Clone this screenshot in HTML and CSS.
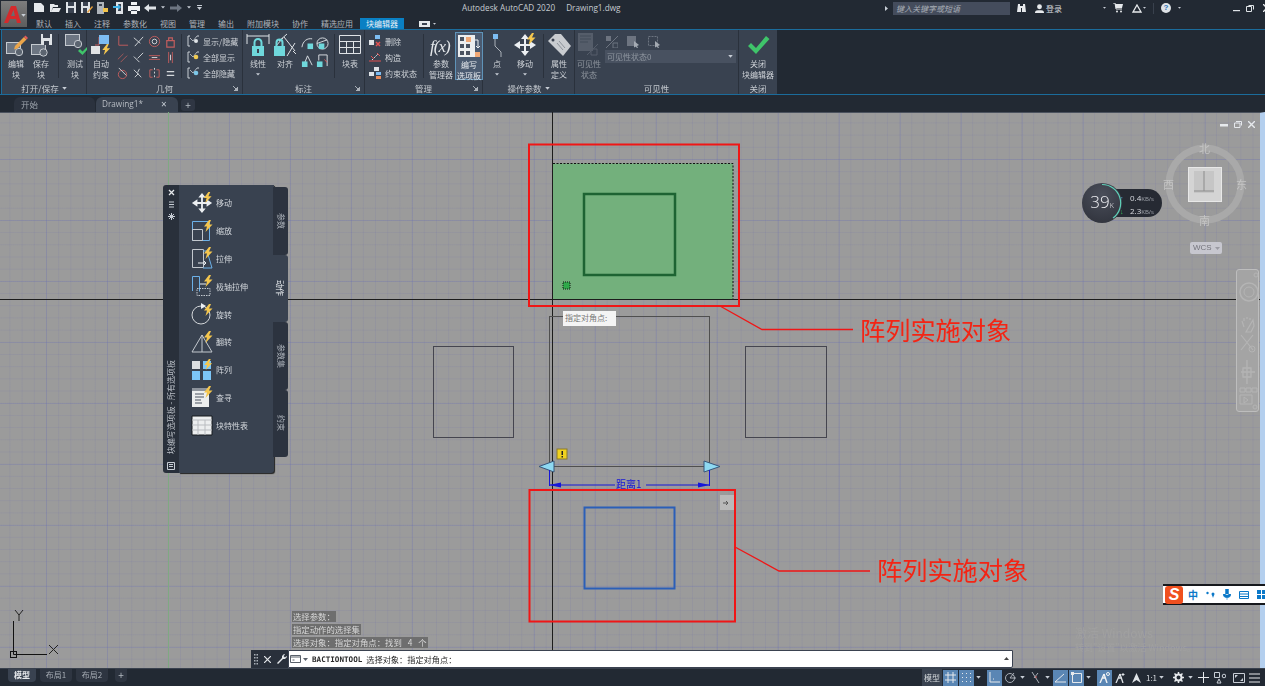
FILE: index.html
```html
<!DOCTYPE html>
<html lang="zh-CN">
<head>
<meta charset="utf-8">
<title>Autodesk AutoCAD 2020 - Drawing1.dwg</title>
<link rel="stylesheet" href="styles.css">
</head>
<body>
<svg class="defs" width="0" height="0" aria-hidden="true">
  <symbol id="bolt" viewBox="0 0 10 12"><path d="M6 0 1 6.500h3L2.500 12 9.500 4.500H6L8 0z" fill="#f4c64e"/></symbol>
  <symbol id="move" viewBox="0 0 24 24"><path d="M11 5h2v14h-2zM5 11h14v2H5z" fill="#eceff2"/><path d="M12 1 8 6h8zM12 23l-4-5h8zM1 12l6-4v8zM23 12l-6-4v8z" fill="#eceff2"/><use href="#bolt" x="13" y="0" width="10" height="12"/></symbol>
  <symbol id="drop" viewBox="0 0 6 4"><path d="M0 0h6L3 3.500z" fill="#c8ced6"/></symbol>
  <symbol id="bracket" viewBox="0 0 13 12"><path d="M3 1H1v10h2M10 1h2" fill="none" stroke="#c9ced4"/><path d="m3 3 3 3 4-5" fill="none" stroke="#c9ced4" stroke-width=".8"/></symbol>
</svg>

<div class="app">
  <header class="titlebar">
    <div class="app-button">
      <svg width="22" height="22" viewBox="0 0 22 22"><path d="M2 20 9 3h5l5 17h-4l-1-4H8l-2 4zM9 13h4l-1.500-6z" fill="#d42a2c"/></svg>
      <svg class="app-drop" width="5" height="3"><use href="#drop"/></svg>
    </div>
    <div class="title-main">
      <div class="title-top">
        <div class="qat">
          <svg width="12" height="11" viewBox="0 0 12 11"><path d="M1 1h7l3 3v6H1z" fill="#e6e9ec"/></svg>
          <svg width="12" height="11" viewBox="0 0 12 11"><path d="M1 2h4l1 1h3v2H4l-2 5H1zM4 6h8l-2 4H2z" fill="#e6e9ec"/></svg>
          <svg width="12" height="11" viewBox="0 0 12 11"><path d="M1 0h10v11H1z" fill="#dfe3e7"/><path d="M3 0h6v4H3zM3 6h6v5H3z" fill="#3a4250"/></svg>
          <svg width="12" height="11" viewBox="0 0 12 11"><path d="M0 0h9v11H0z" fill="#dfe3e7"/><path d="M2 0h5v4H2zM2 6h4v5H2z" fill="#3a4250"/><path d="m6 10 5-6 1 1-5 6z" fill="#e9a13c"/></svg>
          <svg width="12" height="12" viewBox="0 0 12 12"><path d="M0 0h7v12H0z" fill="#aeb4bb"/><path d="M6 6h5v4H6z" fill="#f0c24a"/><path d="M2 2h3v2H2z" fill="#3a4250"/></svg>
          <svg width="11" height="12" viewBox="0 0 11 12"><path d="M3 0h7v12H3z" fill="#dfe3e7"/><path d="M5 2h3v7H5z" fill="#3a4250"/><path d="M0 4h5V2l3 3-3 3V6H0z" fill="#3fb2e8"/></svg>
          <svg width="12" height="12" viewBox="0 0 12 12"><path d="M3 0h6v3H3zM0 4h12v5H0zM3 8h6v4H3z" fill="#f0f2f4"/><path d="M3 8h6v1H3z" fill="#3a4250"/></svg>
          <svg width="12" height="8" viewBox="0 0 12 8"><path d="M0 4 5 0v2.500h7v3H5V8z" fill="#dfe3e7"/></svg>
          <svg class="qat-drop" width="4" height="3"><use href="#drop"/></svg>
          <svg width="12" height="8" viewBox="0 0 12 8"><path d="M12 4 7 0v2.500H0v3h7V8z" fill="#6e7682"/></svg>
          <svg class="qat-drop" width="4" height="3"><use href="#drop"/></svg>
          <svg class="qat-drop" width="5" height="6" viewBox="0 0 5 6"><path d="M0 0h5v1H0zM0 2h5L2.500 5z" fill="#c8ced6"/></svg>
        </div>
        <div class="doc-title"><span>Autodesk AutoCAD 2020</span><span>Drawing1.dwg</span></div>
        <div class="search-area">
          <svg width="3" height="5" viewBox="0 0 3 5"><path d="M0 0l3 2.500L0 5z" fill="#c8ced6"/></svg>
          <div class="search">键入关键字或短语</div>
          <svg width="9" height="10" viewBox="0 0 9 10"><path d="M1 1h2v2h3V1h2l1 8H5V5H4v4H0z" fill="#e6e9ec"/></svg>
          <svg class="user" width="9" height="9" viewBox="0 0 10 10"><circle cx="5" cy="3" r="2.700" fill="#e6e9ec"/><path d="M0 10c0-3 2-3 5-3s5 0 5 3z" fill="#e6e9ec"/></svg>
          <span class="login">登录</span>
          <svg class="login-drop" width="3" height="2"><use href="#drop"/></svg>
          <svg class="cart" width="10" height="10" viewBox="0 0 10 10"><path d="M0 0h2l1 6h6" fill="none" stroke="#e6e9ec"/><path d="M2 1h8L9 5H3z" fill="#e6e9ec"/><circle cx="4" cy="8.500" r="1" fill="#e6e9ec"/><circle cx="8" cy="8.500" r="1" fill="#e6e9ec"/></svg>
          <svg class="a360" width="10" height="9" viewBox="0 0 10 9"><path d="M5 1 9 8H1z" fill="none" stroke="#e6e9ec" stroke-width="1.300"/></svg>
          <svg class="a360-drop" width="3" height="2"><use href="#drop"/></svg>
          <i class="title-sep"></i>
          <span class="help">?</span>
          <svg width="3" height="2"><use href="#drop"/></svg>
          <div class="win-controls">
            <svg width="8" height="8" viewBox="0 0 8 8"><path d="M0 6h7v1.200H0z" fill="#dfe3e7"/></svg>
            <svg width="8" height="8" viewBox="0 0 8 8"><path d="M2.500 1.500h5v4M.5 2.500h5v5h-5z" fill="none" stroke="#dfe3e7"/></svg>
            <svg width="8" height="8" viewBox="0 0 8 8"><path d="m0 0 8 8M8 0 0 8" stroke="#e6e9ec" stroke-width="1.300"/></svg>
          </div>
        </div>
      </div>
      <nav class="ribbon-tabs">
        <span>默认</span><span>插入</span><span>注释</span><span>参数化</span><span>视图</span><span>管理</span><span>输出</span><span>附加模块</span><span>协作</span><span>精选应用</span><span class="tab-active">块编辑器</span>
        <svg class="tab-cam" width="11" height="6" viewBox="0 0 11 6"><path d="M0 0h11v6H0z" fill="#e6e9ec"/><path d="M3 2h5v2H3z" fill="#3a4250"/></svg>
        <svg width="3" height="2"><use href="#drop"/></svg>
      </nav>
    </div>
  </header>

  <section class="ribbon">
    <div class="panel p-open">
      <div class="panel-body">
        <div class="tool"><svg width="24" height="24" viewBox="0 0 24 24"><rect x="2.500" y="9.500" width="14" height="11" fill="#6c7582" stroke="#c5cad0"/><circle cx="15" cy="19" r="3.700" fill="#5b6470" stroke="#c5cad0"/><path d="m11 13 9-9 2.500 2.500-9 9-3.500 1z" fill="#eba54a"/><path d="m20 4 1.500-1.500L24 5l-1.500 1.500z" fill="#e25a5a"/></svg><span>编辑<br>块</span></div>
        <div class="tool"><svg width="24" height="24" viewBox="0 0 24 24"><rect x="2.500" y="11.500" width="14" height="10" fill="#6c7582" stroke="#c5cad0"/><circle cx="14.500" cy="19.500" r="3.700" fill="#5b6470" stroke="#c5cad0"/><path d="M12 1h11v11H12z" fill="#dfe3e7"/><path d="M14 1h7v4h-7zM15 8h5v4h-5z" fill="#3a4250"/></svg><span>保存<br>块</span></div>
        <i class="sep s-a"></i>
        <div class="tool"><svg width="24" height="24" viewBox="0 0 24 24"><rect x="2.500" y="1.500" width="14" height="11" fill="#6c7582" stroke="#c5cad0"/><circle cx="15" cy="11" r="3.700" fill="#5b6470" stroke="#c5cad0"/><path d="m15 18 2-2 2.500 2.500L24 14l1 2-5.500 6z" fill="#3fc46a"/></svg><span>测试<br>块</span></div>
      </div>
      <div class="panel-title">打开/保存 <svg width="5" height="3"><use href="#drop"/></svg></div>
    </div>

    <div class="panel p-geo">
      <div class="panel-body">
        <div class="tool"><svg width="24" height="24" viewBox="0 0 24 24"><path d="M10 4v8M10 12H6" stroke="#c65f5f"/><rect x="10" y="2" width="10" height="9" fill="#7dbdf2"/><rect x="2" y="13" width="9" height="8" fill="#e2e4e6"/><use href="#bolt" x="12" y="11" width="10" height="11"/></svg><span>自动<br>约束</span></div>
        <div class="constraint-grid">
          <svg viewBox="0 0 14 14"><path d="M3 1v10h10" fill="none" stroke="#c25d5d"/></svg>
          <svg viewBox="0 0 14 14"><path d="m2 3 7 6M12 2 3 12" fill="none" stroke="#d5d8db"/></svg>
          <svg viewBox="0 0 14 14"><circle cx="7" cy="7" r="5.500" fill="none" stroke="#c25d5d"/><circle cx="7" cy="7" r="2.500" fill="none" stroke="#d5d8db"/></svg>
          <svg viewBox="0 0 14 14"><path d="M3 6h8v7H3zM5 6V3h4v3" fill="none" stroke="#c25d5d" stroke-width="1.300"/></svg>
          <svg viewBox="0 0 14 14"><path d="m2 9 6-6M5 12l7-7" stroke="#a85a5a"/></svg>
          <svg viewBox="0 0 14 14"><path d="M2 6l6 6M12 2 6 8" stroke="#d5d8db"/></svg>
          <svg viewBox="0 0 14 14"><path d="M1 5h12M1 9h12" stroke="#c25d5d"/><path d="M4 7h6" stroke="#d5d8db"/></svg>
          <svg viewBox="0 0 14 14"><path d="M5 1v12M9 1v12" stroke="#c25d5d"/><path d="M7 4v6" stroke="#d5d8db"/></svg>
          <svg viewBox="0 0 14 14"><circle cx="7" cy="8" r="4.500" fill="none" stroke="#c25d5d"/><path d="m3 1 8 8" stroke="#d5d8db"/></svg>
          <svg viewBox="0 0 14 14"><path d="m2 3 8 8M3 11l4-4M8 2l-2 4" fill="none" stroke="#d5d8db"/></svg>
          <svg viewBox="0 0 14 14"><path d="M7 1v2M7 5v2M7 9v2" stroke="#d5d8db"/><path d="M5 3H2v8h3M9 3h3v8H9" fill="none" stroke="#c25d5d"/></svg>
          <svg viewBox="0 0 14 14"><path d="M3 5h8M3 9h8" stroke="#d5d8db" stroke-width="1.300"/></svg>
        </div>
        <i class="sep"></i>
        <div class="row-list">
          <div class="row"><svg width="13" height="12"><use href="#bracket"/><circle cx="9" cy="6" r="2" fill="#dfe3e7"/></svg>显示/隐藏</div>
          <div class="row"><svg width="13" height="12"><use href="#bracket"/><circle cx="9" cy="6" r="2.300" fill="#f1cb52"/></svg>全部显示</div>
          <div class="row"><svg width="13" height="12"><use href="#bracket"/><circle cx="9" cy="6" r="2.300" fill="#7cc7e8"/></svg>全部隐藏</div>
        </div>
      </div>
      <div class="panel-title">几何<svg class="launch" width="5" height="5" viewBox="0 0 5 5"><path d="M0 0l4 4M5 1v4H1z" stroke="#aab0b8" fill="#aab0b8"/></svg></div>
    </div>

    <div class="panel p-dim">
      <div class="panel-body">
        <div class="tool"><svg width="24" height="24" viewBox="0 0 24 24"><path d="M1 1v10M23 1v10M1 3h22" fill="none" stroke="#dfe3e7"/><path d="M6 13h12v10H6z" fill="#6fd8dc"/><path d="M8.500 13V9.500a3.500 3.500 0 0 1 7 0V13" fill="none" stroke="#6fd8dc" stroke-width="2"/><path d="M11 16h2v4h-2z" fill="#3a4250"/></svg><span>线性<br><svg width="4" height="3"><use href="#drop"/></svg></span></div>
        <div class="tool"><svg width="24" height="24" viewBox="0 0 24 24"><path d="m6 8 8-7M20 18l3 3M2 14l8-9M11 4l11 14M22 10l-8 13" fill="none" stroke="#dfe3e7"/><path d="M1 13h11v10H1z" fill="#6fd8dc"/><path d="M3.500 13V9.500a3 3 0 0 1 6 0V13" fill="none" stroke="#6fd8dc" stroke-width="2"/></svg><span>对齐</span></div>
        <div class="mini-grid">
          <svg viewBox="0 0 14 14"><path d="M1 11C2 4 7 1 12 2" fill="none" stroke="#dfe3e7"/><path d="M7 7h6v6H7z" fill="#6fd8dc"/></svg>
          <svg viewBox="0 0 14 14"><circle cx="7" cy="7" r="6" fill="none" stroke="#dfe3e7"/><path d="M1 7 12 3" stroke="#dfe3e7"/><path d="M3 7h6v6H3z" fill="#6fd8dc"/></svg>
          <svg viewBox="0 0 14 14"><path d="M7 2 3 12M7 2l5 10" stroke="#dfe3e7"/><path d="M1 8h6v6H1z" fill="#6fd8dc"/></svg>
          <svg viewBox="0 0 14 14"><path d="M3 1h9v12" fill="none" stroke="#dfe3e7"/><path d="M3 1v6" stroke="#dfe3e7"/><path d="M1 8h6v6H1z" fill="#6fd8dc"/><path d="M9 6l3 3" stroke="#e05a5a"/></svg>
        </div>
        <i class="sep"></i>
        <div class="tool"><svg width="24" height="24" viewBox="0 0 24 24"><path d="M1.500 2.500h21v18h-21zM1.500 8.500h21M1.500 14.500h21M8.500 8.500v12M15.500 8.500v12" fill="none" stroke="#dfe3e7"/></svg><span>块表</span></div>
      </div>
      <div class="panel-title">标注<svg class="launch" width="5" height="5" viewBox="0 0 5 5"><path d="M0 0l4 4M5 1v4H1z" stroke="#aab0b8" fill="#aab0b8"/></svg></div>
    </div>

    <div class="panel p-manage">
      <div class="panel-body">
        <div class="row-list">
          <div class="row"><svg width="13" height="12" viewBox="0 0 13 12"><path d="M0 5h5v5H0z" fill="#dfe3e7"/><path d="M6 0h5v4H6z" fill="#7dbdf2"/><path d="m7 7 4 4m0-4-4 4" stroke="#e05050" stroke-width="1.500"/></svg>删除</div>
          <div class="row"><svg width="13" height="12" viewBox="0 0 13 12"><path d="M0 10h12" stroke="#e05050"/><path d="m3 9 6-6" stroke="#dfe3e7" stroke-dasharray="2 1"/><path d="m2 5 3 3M8 2l3 3" stroke="#e05050"/></svg>构造</div>
          <div class="row"><svg width="13" height="12" viewBox="0 0 13 12"><path d="M5 0h5v4H5zM0 5h5v4H0z" fill="#dfe3e7"/><path d="M7 5h5v3H7z" fill="#7dbdf2"/><path d="M7 9h5v3H7z" fill="#e98a5a"/></svg>约束状态</div>
        </div>
        <i class="sep"></i>
        <div class="tool"><svg width="24" height="24" viewBox="0 0 24 24"><text x="1" y="19" class="fx">f(x)</text></svg><span>参数<br>管理器</span></div>
        <div class="tool tool-on"><svg width="24" height="24" viewBox="0 0 24 24"><path d="M1 1h17v22H1z" fill="#eceeef"/><path d="M3 3h4v4H3zM3 10h4v4H3zM3 17h4v4H3zM9 10h4v4H9zM9 17h4v4H9z" fill="#4a5260"/><path d="M9 3h5v5H9z" fill="#f0a876"/><path d="M18 18h5v5h-5z" fill="#f0a876"/><path d="M18 6h3v8m-2-2 2 2 2-2" fill="none" stroke="#eceeef"/></svg><span>编写<br>选项板</span></div>
      </div>
      <div class="panel-title">管理<svg class="launch" width="5" height="5" viewBox="0 0 5 5"><path d="M0 0l4 4M5 1v4H1z" stroke="#aab0b8" fill="#aab0b8"/></svg></div>
    </div>

    <div class="panel p-action">
      <div class="panel-body">
        <div class="tool"><svg width="24" height="24" viewBox="0 0 24 24"><path d="M8 1h5v5H8z" fill="#7dbdf2"/><path d="M10 6v7l6 6v5" fill="none" stroke="#aab0b8"/></svg><span>点<br><svg width="4" height="3"><use href="#drop"/></svg></span></div>
        <div class="tool"><svg width="24" height="24"><use href="#move"/></svg><span>移动<br><svg width="4" height="3"><use href="#drop"/></svg></span></div>
        <i class="sep"></i>
        <div class="tool"><svg width="24" height="24" viewBox="0 0 24 24"><path d="M1 8 8 1h6l10 12-8 10z" fill="#c9ccd0"/><circle cx="6" cy="7" r="1.500" fill="#3a4250"/><path d="m10 10 6 7m-4-9 6 7" stroke="#8d939a"/></svg><span>属性<br>定义</span></div>
      </div>
      <div class="panel-title">操作参数 <svg width="5" height="3"><use href="#drop"/></svg></div>
    </div>

    <div class="panel p-vis">
      <div class="panel-body">
        <div class="tool tool-off"><svg width="24" height="24" viewBox="0 0 24 24"><path d="M1 0h15v18H1z" fill="#6d7480"/><path d="M3 3h11M3 6h11M3 9h8" stroke="#4a5260"/><path d="m10 22 11-11M14 16h6v6h-6z" fill="none" stroke="#6d7480"/></svg><span>可见性<br>状态</span></div>
        <div class="vis-controls">
          <div class="vis-icons">
            <svg width="12" height="12" viewBox="0 0 12 12"><path d="M0 0h5v5H0z" fill="#6d7480"/><path d="M7 7h5v5H7zM0 12 12 0" fill="none" stroke="#6d7480"/></svg>
            <svg width="12" height="12" viewBox="0 0 12 12"><path d="M0 0h9v10H0z" fill="#6d7480"/><path d="m7 5 5 4-2 1 1 2-1 .5-1-2-2 1z" fill="#a4aab2"/></svg>
            <svg width="12" height="12" viewBox="0 0 12 12"><path d="M.5.500h9v9h-9z" fill="none" stroke="#6d7480" stroke-dasharray="2 1"/><path d="m7 5 5 4-2 1 1 2-1 .5-1-2-2 1z" fill="#a4aab2"/></svg>
          </div>
          <div class="vis-select">可见性状态0<svg width="5" height="3"><use href="#drop"/></svg></div>
        </div>
      </div>
      <div class="panel-title">可见性</div>
    </div>

    <div class="panel p-close">
      <div class="panel-body">
        <div class="tool tool-wide"><svg width="24" height="24" viewBox="0 0 24 24"><path d="m2 13 3-3 5 5L20 3l3.500 3L10 21z" fill="#3fc46a"/></svg><span>关闭<br>块编辑器</span></div>
      </div>
      <div class="panel-title">关闭</div>
    </div>
  </section>

  <nav class="file-tabs">
    <span class="file-tab">开始</span>
    <span class="file-tab file-current">Drawing1*<b>×</b></span>
    <span class="file-add">+</span>
  </nav>

  <main class="canvas">
    <svg class="drawing" width="1260" height="556" viewBox="0 112 1260 556">
      <path d="M168.500 112v556" stroke="#7fa982"/>
      <rect x="553" y="163.500" width="180" height="136" fill="#73b07c"/>
      <path d="M553 163.500h180v136" fill="none" stroke="#111" stroke-dasharray="2 1.500"/>
      <path d="M0 299.500h1260M552.500 112v538" stroke="#1c1c1c"/>
      <rect x="584" y="194" width="91" height="81" fill="none" stroke="#1e6333" stroke-width="2.500"/>
      <rect x="563" y="282" width="7" height="7" fill="#2fa84a" stroke="#111" stroke-dasharray="1 1"/>
      <rect x="529" y="144.500" width="210" height="161.500" fill="none" stroke="#f01616" stroke-width="2"/>
      <rect x="549.500" y="316.500" width="160" height="150" fill="none" stroke="#4f4f4f"/>
      <rect x="433.500" y="346.500" width="80" height="91" fill="none" stroke="#45454f"/>
      <rect x="745.500" y="346.500" width="81" height="91" fill="none" stroke="#45454f"/>
      <path d="M539 466.500 554 461v11zM720 466.500 704 461v11z" fill="#8ed9f2" stroke="#36557a"/>
      <rect x="557" y="449" width="10" height="10" fill="#f0d21e" stroke="#8b7b2a"/>
      <path d="M561.500 451h1.500v4h-1.500zM561.500 456h1.500v1.500h-1.500z" fill="#222"/>
      <path d="M549.500 470v16M709.500 470v16M549 485h66M646 485h64" stroke="#1616d8"/>
      <path d="M549 485l12-2.500v5zM710 485l-12-2.500v5z" fill="#1616d8"/>
      <text x="616" y="488" class="dim-label">距离1</text>
      <rect x="529.500" y="490" width="205.500" height="131.500" fill="none" stroke="#f01616" stroke-width="2"/>
      <rect x="584.500" y="507.500" width="90" height="81" fill="none" stroke="#2b5fb8" stroke-width="2"/>
      <rect x="720" y="495" width="14" height="15" fill="#b9b9b9"/>
      <path d="M723 503h5M726 501l2 2-2 2" fill="none" stroke="#555"/>
      <path d="M720 306 762 329.500H853M735 547 779 571H870" fill="none" stroke="#f01616" stroke-width="1.300"/>
      <text x="860" y="340" class="note">阵列实施对象</text>
      <text x="877" y="580" class="note">阵列实施对象</text>
      <path d="M13.500 621v33.500H47" fill="none" stroke="#111"/>
      <rect x="10.500" y="651.500" width="6" height="6" fill="none" stroke="#111"/>
      <path d="m15 610 4 5 4-5M19 615v6M49 645l9 9M58 645l-9 9" fill="none" stroke="#222"/>
    </svg>

    <aside class="palette">
      <div class="palette-strip">
        <div class="strip-icons">
          <svg width="7" height="7" viewBox="0 0 7 7"><path d="m1 1 5 5M6 1 1 6" stroke="#e6e9ec" stroke-width="1.300"/></svg>
          <svg width="7" height="7" viewBox="0 0 7 7"><path d="M1 1h5M1 3.500h5M1 6h5" stroke="#c8ced6"/></svg>
          <svg width="7" height="7" viewBox="0 0 7 7"><path d="M1 1l5 5M6 1 1 6M3.500 0v7M0 3.500h7" stroke="#c8ced6"/></svg>
        </div>
        <div class="strip-title">块编写选项板 - 所有选项板</div>
        <svg class="strip-foot" width="8" height="8" viewBox="0 0 8 8"><path d="M.5.500h7v7h-7zM2 2.500h4M2 4.500h4" fill="none" stroke="#c8ced6"/></svg>
      </div>
      <ul class="palette-list">
        <li><svg width="22" height="22"><use href="#move"/></svg>移动</li>
        <li><svg width="22" height="22" viewBox="0 0 22 22"><path d="M1.500 1.500h17v19h-17z" fill="none" stroke="#6cb1e8"/><path d="M1.500 9.500h10v11h-10z" fill="none" stroke="#c3c8ce"/><use href="#bolt" x="12" y="0" width="10" height="12"/></svg>缩放</li>
        <li><svg width="22" height="22" viewBox="0 0 22 22"><path d="M1.500 2.500h11v18h-11z" fill="none" stroke="#c3c8ce"/><path d="M12 4l4 0 5 17H12" fill="none" stroke="#6cb1e8"/><path d="M7 16h8m-2-2 2 2-2 2" fill="none" stroke="#eceff2"/><use href="#bolt" x="12" y="0" width="10" height="12"/></svg>拉伸</li>
        <li><svg width="22" height="22" viewBox="0 0 22 22"><path d="M1.500 16V1.500h7v15" fill="none" stroke="#6cb1e8"/><path d="M6 13.500h13v7H6z" fill="none" stroke="#c3c8ce" stroke-dasharray="1.500 1"/><path d="M9 9h6" stroke="#eceff2"/><use href="#bolt" x="12" y="0" width="10" height="12"/></svg>极轴拉伸</li>
        <li><svg width="22" height="22" viewBox="0 0 22 22"><circle cx="10" cy="12" r="9" fill="none" stroke="#d5d8db"/><path d="M10 0l5 3-5 3z" fill="#eceff2"/><use href="#bolt" x="12" y="1" width="10" height="12"/></svg>旋转</li>
        <li><svg width="22" height="22" viewBox="0 0 22 22"><path d="M1 21 11 4v17zM11 4l10 17H11" fill="none" stroke="#c3c8ce"/><use href="#bolt" x="12" y="0" width="10" height="12"/></svg>翻转</li>
        <li><svg width="22" height="22" viewBox="0 0 22 22"><path d="M1 2h8v8H1z" fill="#dcdfe2"/><path d="M12 2h8v8h-8zM1 12h8v9H1zM12 12h8v9h-8z" fill="#7cc5f7"/><use href="#bolt" x="12" y="0" width="10" height="11"/></svg>阵列</li>
        <li><svg width="22" height="22" viewBox="0 0 22 22"><path d="M1 2h17v19H1z" fill="#eceeef"/><path d="M1 2h17v3H1z" fill="#8e949c"/><path d="M4 8h9M4 11h9M4 14h6M4 17h7" stroke="#4a5260"/><use href="#bolt" x="12" y="0" width="10" height="12"/></svg>查寻</li>
        <li><svg width="22" height="22" viewBox="0 0 22 22"><path d="M1 2h20v19H1z" fill="#eceeef" stroke="#15181d"/><path d="M1 6h20M1 11h20M1 16h20M7 6v15M14 6v15" stroke="#b9bcc0"/></svg>块特性表</li>
      </ul>
      <div class="palette-tabs">
        <div class="ptab">参数</div>
        <div class="ptab ptab-on">动作</div>
        <div class="ptab">参数集</div>
        <div class="ptab">约束</div>
      </div>
    </aside>

    <div class="tooltip">指定对角点:</div>

    <div class="speed">
      <div class="speed-pill">
        <div><b class="up">↑</b>0.4<small>KB/s</small></div>
        <div><b class="down">↓</b>2.3<small>KB/s</small></div>
      </div>
      <div class="speed-ball">39<small>K</small>
        <svg width="40" height="40" viewBox="0 0 40 40"><path d="M20 1.500A18.500 18.500 0 0 1 31 35" fill="none" stroke="#5fd0b8" stroke-width="1.200"/></svg>
      </div>
    </div>

    <div class="win-mini">
      <svg width="8" height="6" viewBox="0 0 8 6"><path d="M0 2h8v2.500H0z" fill="#e6e9ec"/></svg>
      <svg width="8" height="7" viewBox="0 0 8 7"><path d="M2 .5h5.500v4M.5 2h5.500v4.500H.5z" fill="none" stroke="#e6e9ec"/></svg>
      <svg width="7" height="7" viewBox="0 0 7 7"><path d="m0 0 7 7M7 0 0 7" stroke="#e6e9ec" stroke-width="1.400"/></svg>
    </div>

    <div class="viewcube">
      <svg width="84" height="84" viewBox="0 0 84 84">
        <circle cx="42" cy="42" r="36" fill="none" stroke="#a9a9a9" stroke-width="7"/>
        <rect x="25.500" y="25.500" width="33" height="34" fill="#d4d4d4" stroke="#e8e8e8"/>
        <rect x="31" y="29" width="20" height="22" fill="#c6c6c6"/>
        <path d="M41 29v20M31 49h20" stroke="#8c8c8c"/>
      </svg>
      <span class="vc-n">北</span><span class="vc-w">西</span><span class="vc-e">东</span><span class="vc-s">南</span>
      <div class="wcs">WCS <svg width="5" height="3" viewBox="0 0 5 3"><path d="M0 0h5L2.500 3z" fill="#9a9aa2"/></svg></div>
    </div>

    <div class="navbar">
      <svg width="22" height="142" viewBox="0 0 22 142">
        <g fill="none" stroke="#b4b4b4">
          <circle cx="19" cy="5" r="2"/>
          <circle cx="12" cy="22" r="9" stroke-width="1.500"/><circle cx="12" cy="22" r="5"/>
          <path d="M7 57 5 51M7 51v-3M10 49v-2M13 48v2M16 50l1 6-3 6H9z" stroke-width="1.200"/>
          <path d="m4 65 12 15M16 65 4 80" stroke-width="1.200"/><circle cx="15" cy="79" r="3"/>
          <path d="M10 90v24M4 102h14M6 98h8v9H6z" stroke-width="1.300"/>
          <path d="M3 118h5v4H3zM9 118h5v4H9zM15 118h5v4h-5zM3 125h12v9H3z"/>
          <path d="m7 127 4 3-4 3z"/>
          <circle cx="18" cy="137" r="2"/>
        </g>
      </svg>
    </div>

    <div class="sogou">
      <span class="sogou-logo">S</span><span class="sg-zh">中</span>
      <svg width="9" height="9" viewBox="0 0 9 9"><circle cx="1.500" cy="3" r="1.200" fill="#0b78c8"/><circle cx="7" cy="4" r="1.500" fill="#0b78c8"/><path d="M6 5h2l-1 3z" fill="#0b78c8"/></svg>
      <svg width="8" height="11" viewBox="0 0 8 11"><path d="M2.500 0h3v6h-3zM0 5c0 5 8 5 8 0M4 8v3" fill="#0b78c8" stroke="#0b78c8" stroke-width=".5"/></svg>
      <svg width="10" height="8" viewBox="0 0 10 8"><path d="M.5.500h9v7h-9zM0 3h10M0 5.500h10" fill="none" stroke="#0b78c8"/></svg>
      <svg width="9" height="9" viewBox="0 0 9 9"><path d="M0 0h4v4H0zM5 0h4v4H5zM0 5h4v4H0zM5 5h4v4H5z" fill="#0b78c8"/></svg>
    </div>

    <div class="watermark"><div class="wm-big">激活 Windows</div><div>转到"设置"以激活 Windows。</div></div>

    <div class="history">
      <span>选择参数：</span><span>指定动作的选择集</span><span>选择对象：指定对角点：找到 4 个</span>
    </div>

    <div class="cmdline">
      <div class="cmd-tools">
        <svg width="4" height="11" viewBox="0 0 4 11"><path d="M0 0h1.500v1.500H0zM2.500 0H4v1.500H2.500zM0 3h1.500v1.500H0zM2.500 3H4v1.500H2.500zM0 6h1.500v1.500H0zM2.500 6H4v1.500H2.500zM0 9h1.500v1.500H0zM2.500 9H4v1.500H2.500z" fill="#aab0b8"/></svg>
        <svg width="7" height="7" viewBox="0 0 7 7"><path d="m0 0 7 7M7 0 0 7" stroke="#e6e9ec" stroke-width="1.200"/></svg>
        <svg width="10" height="10" viewBox="0 0 10 10"><path d="m0 9 5-5V2l2-2 1 .5L6.500 2l1.500 1.500L9.500 2l.5 1-2 2H6L1 10z" fill="#e6e9ec"/></svg>
      </div>
      <div class="cmd-input">
        <svg width="11" height="8" viewBox="0 0 11 8"><path d="M.5.500h10v7H.5zM1 2h9M2.500 5h2" fill="none" stroke="#59606a"/></svg>
        <svg class="cmd-drop" width="5" height="3" viewBox="0 0 5 3"><path d="M0 0h5L2.500 3z" fill="#59606a"/></svg>
        <b>BACTIONTOOL</b><span>选择对象：指定对角点：</span>
        <svg class="cmd-up" width="5" height="3" viewBox="0 0 5 3"><path d="M0 3h5L2.500 0z" fill="#444"/></svg>
      </div>
    </div>
  </main>

  <footer class="statusbar">
    <div class="layouts">
      <span class="layout layout-on">模型</span><span class="layout">布局1</span><span class="layout">布局2</span><span class="layout-add">+</span>
    </div>
    <div class="status-tools">
      <span class="st-model">模型</span>
      <span class="st on"><svg width="11" height="11" viewBox="0 0 11 11"><path d="M3 0v11M8 0v11M0 3h11M0 8h11" stroke="#e6e9ec"/></svg></span>
      <span class="st on"><svg width="9" height="9" viewBox="0 0 9 9"><path d="M0 0h1v1H0zM4 0h1v1H4zM8 0h1v1H8zM0 4h1v1H0zM4 4h1v1H4zM8 4h1v1H8zM0 8h1v1H0zM4 8h1v1H4zM8 8h1v1H8z" fill="#e6e9ec"/></svg></span>
      <svg class="st-drop" width="5" height="3"><use href="#drop"/></svg>
      <span class="st on on-gap"><svg width="11" height="11" viewBox="0 0 11 11"><path d="M1 0v10h10" fill="none" stroke="#e6e9ec"/><path d="M4 7h1" stroke="#e6e9ec"/></svg></span>
      <span class="st"><svg width="11" height="11" viewBox="0 0 11 11"><circle cx="5" cy="6" r="4.500" fill="none" stroke="#aab0b8"/><path d="M5 6h6M5 6l4-5" stroke="#aab0b8"/></svg></span>
      <svg class="st-drop" width="5" height="3"><use href="#drop"/></svg>
      <span class="st"><svg width="11" height="11" viewBox="0 0 11 11"><path d="m2 0 7 11M8 1 4 6" stroke="#aab0b8"/><path d="M5 5h2" stroke="#d05a5a"/></svg></span>
      <svg class="st-drop" width="5" height="3"><use href="#drop"/></svg>
      <span class="st on"><svg width="11" height="11" viewBox="0 0 11 11"><path d="M0 10h11M0 10 9 2" stroke="#e6e9ec"/></svg></span>
      <span class="st on"><svg width="11" height="11" viewBox="0 0 11 11"><path d="M1.500 1.500h9v9h-9z" fill="none" stroke="#e6e9ec"/><path d="M0 0h3v3H0z" fill="#e6e9ec"/></svg></span>
      <svg class="st-drop" width="5" height="3"><use href="#drop"/></svg>
      <span class="st on on-gap"><svg width="11" height="11" viewBox="0 0 11 11"><path d="M5 2 1 11M5 2l3 9M3 6h4" stroke="#f0f2f4" stroke-width="1.400"/><circle cx="9" cy="2" r="1.500" fill="none" stroke="#f0f2f4"/></svg></span>
      <span class="st"><svg width="11" height="11" viewBox="0 0 11 11"><path d="M5 2 1 11M5 2l3 9M3 6h4" stroke="#dfe3e7" stroke-width="1.300"/><path d="M8 1v3M6.500 2.500h3" stroke="#dfe3e7"/></svg></span>
      <span class="st"><svg width="11" height="11" viewBox="0 0 11 11"><path d="M5.500 1 1 11l4.500-3 4.500 3z" fill="#dfe3e7"/></svg></span>
      <span class="st-scale">1:1</span>
      <svg class="st-drop" width="5" height="3"><use href="#drop"/></svg>
      <span class="st st-gear"><svg width="11" height="11" viewBox="0 0 11 11"><circle cx="5.500" cy="5.500" r="3" fill="none" stroke="#e6e9ec" stroke-width="2"/><path d="M5.500 0v2M5.500 9v2M0 5.500h2M9 5.500h2M1.500 1.500 3 3M8 8l1.500 1.500M9.500 1.500 8 3M3 8 1.500 9.500" stroke="#e6e9ec" stroke-width="1.500"/></svg></span>
      <svg class="st-drop" width="5" height="3"><use href="#drop"/></svg>
      <span class="st"><svg width="11" height="11" viewBox="0 0 11 11"><path d="M5.500 0v11M0 5.500h11" stroke="#e6e9ec"/></svg></span>
      <span class="st"><svg width="12" height="12" viewBox="0 0 12 12"><path d="M.5.500h5v5h-5zM3 11l2-4 2 4z" fill="none" stroke="#c8ced6"/><circle cx="10" cy="4" r="1.800" fill="none" stroke="#c8ced6"/></svg></span>
      <span class="st st-wide"><svg width="12" height="10" viewBox="0 0 12 10"><path d="M.5.500h11v9H.5z" fill="none" stroke="#c8ced6"/><path d="M2 2h3L2 5zM10 8H7l3-3z" fill="#c8ced6"/></svg></span>
      <span class="st"><svg width="11" height="10" viewBox="0 0 11 10"><path d="M0 1h11M0 5h11M0 9h11" stroke="#e6e9ec"/></svg></span>
    </div>
  </footer>
</div>
</body>
</html>
```

FILE: styles.css
```css
* { box-sizing: border-box; }
html, body { margin: 0; height: 100%; overflow: hidden; background: #222933; }
body { font-family: "Noto Sans CJK SC", "Noto Sans", sans-serif; font-size: 8px; color: #ccd1d7; }
svg { display: block; flex: none; }
.defs { position: absolute; }
.app { display: flex; flex-direction: column; width: 1265px; height: 686px; overflow: hidden; filter: blur(.3px); }

/* title bar */
.titlebar { display: flex; height: 29px; background: #222933; flex: none; }
.app-button { position: relative; width: 26px; height: 26px; margin: 1px 0 0 1px; padding: 2px 0 0 1px; background: linear-gradient(#7d7d7d, #5d5d5d); flex: none; }
.app-drop { position: absolute; right: 1px; top: 13px; }
.title-main { flex: 1; display: flex; flex-direction: column; }
.title-top { display: flex; align-items: center; height: 18px; padding-bottom: 3px; }
.qat { display: flex; align-items: center; gap: 4px; margin-left: 6px; width: 170px; }
.qat-drop { margin: 0 1px; }
.doc-title { display: flex; gap: 11px; margin-left: 259px; font-family: "Open Sans", "Noto Sans", sans-serif; font-size: 8.200px; color: #c6cbd1; width: 400px; }
.search-area { display: flex; align-items: center; position: absolute; left: 885px; top: 1px; height: 14px; gap: 7px; width: 380px; }
.search { width: 117px; height: 13px; margin-left: -2px; padding-left: 3px; background: #444c5c; color: #a8aeb6; font-style: italic; line-height: 13px; flex: none; }
.user { margin-left: 2px; margin-right: -5px; }
.login { color: #d4d8dc; white-space: nowrap; flex: none; }
.login-drop { margin-left: 34px; }
.a360 { margin-left: 2px; }
.a360-drop { margin-left: -6px; }
.title-sep { width: 1px; height: 11px; background: #39414d; flex: none; }
.help { width: 10px; height: 10px; border-radius: 50%; background: #dfe3e7; color: #2a6fb8; font: bold 8px/10px "Liberation Sans", sans-serif; text-align: center; flex: none; }
.win-controls { display: flex; gap: 5px; margin-left: 45px; }
.win-controls svg + svg + svg { margin-left: 4px; }

.ribbon-tabs { display: flex; align-items: center; gap: 13px; height: 11px; margin-left: 9px; color: #aeb4bb; line-height: 11px; }
.tab-active { background: #0a80c4; color: #e8f0f6; padding: 0 6px; margin-left: -6px; height: 11px; }
.tab-cam { margin-left: 2px; margin-right: -10px; }

/* ribbon */
.ribbon { display: flex; height: 66px; flex: none; border-top: 1px solid #1b6c9c; border-bottom: 1px solid #1b6c9c; padding-left: 1px; }
.panel { display: flex; flex-direction: column; background: #394250; border-right: 1px solid #2a313c; flex: none; }
.panel-body { display: flex; height: 52px; padding-top: 3px; flex: none; }
.panel-title { position: relative; display: flex; align-items: center; justify-content: center; gap: 3px; height: 12px; color: #c4c9cf; font-size: 8.500px; line-height: 12px; }
.launch { position: absolute; right: 4px; top: 4px; }
.p-open { width: 86px; border-left: 1px solid #1b6c9c; }
.p-geo { width: 156px; }
.p-dim { width: 122px; }
.p-manage { width: 118px; }
.p-action { width: 92px; }
.p-vis { width: 164px; }
.p-close { width: 38px; border-right: 0; }

.tool { display: flex; flex-direction: column; align-items: center; width: 24px; flex: none; }
.tool span { display: block; margin-top: 1px; width: 40px; text-align: center; line-height: 11px; color: #cfd3d8; }
.tool span svg { display: inline-block; vertical-align: 2px; }
.sep { width: 1px; height: 44px; margin-top: 1px; background: #2a313c; flex: none; }

.p-open .panel-body { padding-left: 2px; gap: 1px; }
.s-a { margin: 1px 3px 0 4px; }
.p-geo .panel-body { padding-left: 2px; }
.constraint-grid { display: grid; grid-template-columns: repeat(4, 16px); grid-auto-rows: 16px; margin: 1px 0 0 2px; }
.constraint-grid svg, .mini-grid svg { width: 13px; height: 13px; margin: 1px; }
.p-geo .sep { margin-left: 2px; }
.row-list { display: flex; flex-direction: column; flex: none; }
.row { display: flex; align-items: center; gap: 3px; height: 16px; color: #cfd3d8; white-space: nowrap; }
.p-geo .row-list { margin: 0 0 0 5px; }
.p-dim .panel-body { padding-left: 3px; }
.p-dim .tool + .tool { margin-left: 3px; }
.mini-grid { display: grid; grid-template-columns: repeat(2, 15px); grid-auto-rows: 17px; margin: 3px 0 0 3px; flex: none; }
.p-dim .sep { margin: 1px 3px 0 4px; }
.p-manage .row-list { margin: 0 0 0 4px; width: 49px; }
.p-manage .sep { margin-left: 5px; margin-right: 5px; }
.tool-on { width: 28px; height: 48px; margin: -1px 0 0 2px; padding-top: 1px; background: #4a5a70; border: 1px solid #5f93b8; }
.tool-on span { width: 26px; color: #e4e8ec; }
.fx { font: italic 17px "Liberation Serif", serif; fill: #e4e7ea; letter-spacing: -1px; }
.p-action .panel-body { padding-left: 2px; }
.p-action .tool + .tool { margin-left: 4px; }
.p-action .sep { margin: 1px 3px 0 6px; }
.p-vis .panel-body { padding-left: 2px; }
.tool-off { opacity: .55; }
.vis-controls { margin-left: 4px; width: 131px; }
.vis-icons { display: flex; gap: 6px; height: 17px; padding: 3px 0 0 1px; }
.vis-icons svg + svg { margin-left: 3px; }
.vis-select { display: flex; align-items: center; justify-content: space-between; height: 13px; padding: 0 3px 0 2px; background: #485160; color: #8f96a0; }
.p-close .panel-body { justify-content: center; }
.tool-wide { width: 36px; }

/* file tabs */
.file-tabs { display: flex; align-items: flex-end; height: 17px; padding-left: 14px; background: #222933; flex: none; gap: 1px; }
.file-tab { position: relative; display: block; width: 81px; height: 15px; padding-left: 7px; background: #2b323e; border-radius: 6px 6px 0 0; color: #9ea5ae; line-height: 14px; font-size: 8.500px; }
.file-current { width: 82px; padding-left: 6px; background: #394250; color: #b7bcc3; font-family: "Open Sans", "Noto Sans", sans-serif; font-size: 8.200px; }
.file-current b { position: absolute; left: 65px; top: 0; font-weight: 400; font-size: 10px; color: #c8ced6; }
.file-add { width: 14px; height: 12px; margin-left: 2px; margin-bottom: 1px; border-radius: 3px; background: #2f3643; color: #b4bac2; text-align: center; font-size: 10px; line-height: 12px; }

/* canvas */
.canvas { position: relative; flex: none; height: 556px; background-color: #9b9b9b; border-right: 5px solid #b4cfee; border-top: 1px solid #4b525e;
  background-image:
    linear-gradient(to right, rgba(112,118,178,.26) 1px, transparent 1px),
    linear-gradient(to bottom, rgba(112,118,178,.26) 1px, transparent 1px),
    linear-gradient(to right, rgba(122,124,165,.2) 1px, transparent 1px),
    linear-gradient(to bottom, rgba(122,124,165,.2) 1px, transparent 1px);
  background-size: 61px 61px, 61px 61px, 12.200px 12.200px, 12.200px 12.200px;
  background-position: 46px 46px, 46px 46px, 46px 46px, 46px 46px;
}
.drawing { position: absolute; left: 0; top: -1px; }
.note { font-family: "Noto Sans CJK SC", sans-serif; font-size: 25.200px; fill: #f42414; }
.dim-label { font-family: "Noto Sans CJK SC", sans-serif; font-size: 10px; fill: #1616d8; }

/* palette */
.palette { position: absolute; left: 163px; top: 72px; display: flex; width: 125px; height: 288px; }
.palette-strip { position: relative; width: 16px; background: #29303b; border-radius: 3px 0 0 3px; display: flex; flex-direction: column; align-items: center; padding: 4px 0; }
.strip-icons { display: flex; flex-direction: column; gap: 5px; }
.strip-title { position: absolute; bottom: 19px; left: 2px; writing-mode: vertical-rl; text-orientation: sideways; transform: rotate(180deg); color: #b9bec5; white-space: nowrap; line-height: 12px; }
.strip-foot { position: absolute; bottom: 3px; left: 4px; }
.palette-list { list-style: none; margin: 0; padding: 4px 0 0 12px; width: 95px; background: #394250; border-radius: 0 0 3px 0; flex: none; box-shadow: 1px 1px 1px #222; }
.palette-list li { display: flex; align-items: center; gap: 3px; height: 27.800px; color: #d3d7dc; }
.palette-tabs { width: 14px; margin-top: 2px; display: flex; flex-direction: column; }
.ptab { height: 67.500px; margin-left: -1px; width: 15px; background: #2c333f; border-radius: 0 3px 3px 0; writing-mode: vertical-rl; text-orientation: sideways; display: flex; align-items: center; justify-content: center; line-height: 14px; color: #a9afb7; }
.ptab-on { background: #394250; color: #edf0f2; margin-left: -2px; width: 16px; }

.tooltip { position: absolute; left: 563px; top: 198px; width: 53px; height: 15px; background: #f4f4f4; color: #777; padding-left: 2px; line-height: 14px; }

/* network speed widget */
.speed { position: absolute; left: 1082px; top: 70px; display: flex; align-items: center; width: 80px; height: 40px; }
.speed-ball { position: absolute; left: 0; top: 0; width: 40px; height: 40px; border-radius: 50%; background: radial-gradient(circle at 50% 30%, #4a4e5a, #2d3039); color: #f0f0f4; font: 300 17px/38px "Open Sans", sans-serif; text-align: center; }
.speed-ball small { font-size: 7px; }
.speed-ball svg { position: absolute; left: 0; top: 0; }
.speed-pill { margin-left: 28px; width: 52px; height: 28px; padding: 3px 0 0 15px; border-radius: 0 14px 14px 0; background: #262a33; color: #d8dae0; font: 8px/11px "Open Sans", sans-serif; white-space: nowrap; }
.speed-pill small { font-size: 6px; color: #a0a4ac; }
.speed-pill b { display: inline-block; width: 10px; margin-left: -5px; font-size: 7px; }
.up { color: #59b7e8; }
.down { color: #36c05a; }

.win-mini { position: absolute; left: 1220px; top: 8px; display: flex; align-items: center; gap: 6px; }

.viewcube { position: absolute; left: 1163px; top: 29px; width: 84px; height: 134px; }
.viewcube span { position: absolute; color: #c4c4c4; font-size: 11px; line-height: 12px; }
.vc-n { left: 36px; top: 0; }
.vc-s { left: 36px; top: 72px; }
.vc-w { left: 0; top: 36px; }
.vc-e { left: 73px; top: 36px; }
.wcs { position: absolute; left: 27px; top: 100px; display: flex; align-items: center; gap: 3px; width: 32px; height: 12px; padding-left: 3px; background: #c7c7cf; border-radius: 2px; color: #74747c; font: 8px/12px "Liberation Sans", sans-serif; }

.navbar { position: absolute; left: 1236px; top: 156px; width: 23px; height: 143px; background: #a4a4a4; border: 1px solid #bdbdbd; border-radius: 3px; }

.sogou { position: absolute; left: 1163px; top: 471px; display: flex; align-items: center; gap: 8px; width: 102px; height: 21px; background: #fff; border: 2px solid #16181c; border-right: 0; border-left-width: 0; padding-left: 2px; }
.sogou-logo { width: 18px; height: 18px; background: #f0501e; border-radius: 3px; color: #fff; font: italic bold 16px/18px "Liberation Sans", sans-serif; text-align: center; flex: none; }
.sg-zh { margin-left: -3px; color: #0b78c8; font-size: 10px; font-weight: 700; }

.watermark { position: absolute; left: 1075px; top: 511px; color: #a0a0a0; font-size: 9px; line-height: 14px; white-space: nowrap; }
.wm-big { font-size: 12px; line-height: 17px; }

.history { position: absolute; left: 292px; top: 498px; display: flex; flex-direction: column; align-items: flex-start; gap: 2px; font-size: 8.400px; }
.history span { display: block; height: 11px; padding: 0 1px; background: #6e6e6e; color: #d8d8d8; line-height: 11px; word-spacing: 4px; }

.cmdline { position: absolute; left: 251px; top: 537px; display: flex; width: 762px; height: 18px; }
.cmd-tools { display: flex; align-items: center; gap: 6px; width: 37px; padding-left: 3px; background: #29303b; flex: none; }
.cmd-input { position: relative; flex: 1; display: flex; align-items: center; gap: 2px; padding-left: 1px; background: #fff; border: 1px solid #3a4250; border-radius: 0 0 2px 0; color: #2a2a2a; font-size: 8.200px; white-space: nowrap; }
.cmd-input b { margin-left: 2px; margin-right: 2px; font: bold 7.600px "DejaVu Sans Mono", "Liberation Mono", monospace; }
.cmd-up { position: absolute; right: 3px; top: 6px; }

/* status bar */
.statusbar { display: flex; justify-content: space-between; height: 18px; background: #222933; border-top: 1px solid #39414d; flex: none; }
.layouts { display: flex; align-items: flex-start; gap: 4px; padding-left: 8px; }
.layout { display: block; width: 32px; height: 13px; padding-top: 0; background: #2e3541; border-radius: 0 0 4px 4px; color: #a6acb4; line-height: 12px; text-align: center; }
.layout-on { width: 28px; background: #394250; color: #e8ebee; font-weight: 700; }
.layout-add { width: 12px; margin-left: 3px; height: 13px; background: #2e3541; border-radius: 0 0 4px 4px; color: #b4bac2; text-align: center; font-size: 10px; line-height: 11px; }
.status-tools { display: flex; align-items: center; padding-right: 2px; }
.st-model { width: 20px; height: 17px; margin-right: 1px; background: #394250; color: #d6dade; line-height: 17px; text-align: center; }
.st { display: flex; align-items: center; justify-content: center; width: 15px; height: 16px; margin-right: 1px; }
.st.on { background: #5a86b4; }
.on-gap { margin-left: 3px; }
.st-drop { margin: 0 3px 0 1px; }
.st-scale { width: 13px; color: #d6dade; text-align: center; }
.st-gear { margin-left: 4px; }
.st-wide { margin-left: 3px; }
```
